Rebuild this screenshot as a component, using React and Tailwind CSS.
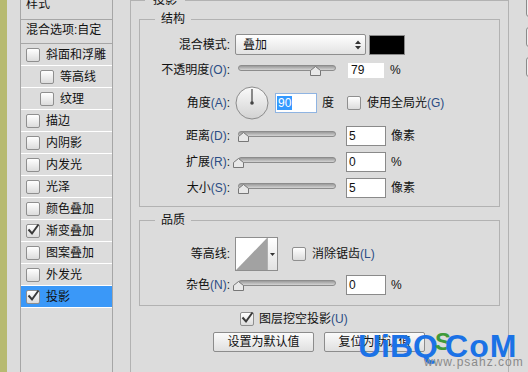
import React from "react";

// left list of layer styles
const styles = [
  { label: "斜面和浮雕" },
  { label: "等高线", sub: true },
  { label: "纹理", sub: true },
  { label: "描边" },
  { label: "内阴影" },
  { label: "内发光" },
  { label: "光泽" },
  { label: "颜色叠加" },
  { label: "渐变叠加", checked: true },
  { label: "图案叠加" },
  { label: "外发光" },
  { label: "投影", checked: true, active: true },
];

function Check({ checked }) {
  return (
    <span className="relative flex h-[14px] w-[14px] shrink-0 rounded-[2px] border border-[#8f8f8f] bg-linear-to-b from-white to-[#dcdcdc]">
      {checked && (
        <svg viewBox="0 0 14 14" className="absolute left-[-1px] top-[-2px] h-[14px] w-[14px] overflow-visible">
          <path d="M2.5 6.5 L6 10.5 L12.5 1.5" fill="none" stroke="#3a3a3a" strokeWidth="2" />
        </svg>
      )}
    </span>
  );
}

function Acc({ children }) {
  return <span className="text-[#2b4c84]">{children}</span>;
}

function Slider({ at }) {
  return (
    <div className="relative ml-[8px] h-[20px] w-[98px] shrink-0">
      <div className="mt-[5px] h-[6px] rounded-full border border-[#8c8c8c] bg-linear-to-b from-[#9a9a9a] to-[#d4d4d4]" />
      <svg className="absolute top-[6px] h-[10px] w-[11px]" style={{ left: at }} viewBox="0 0 11 10">
        <path d="M0.5 9.5V4.5L5.5 0.5L10.5 4.5V9.5Z" fill="#e8e8e8" stroke="#777" />
      </svg>
    </div>
  );
}

function NumBox({ value }) {
  return (
    <div className="ml-[10px] flex h-[20px] w-[40px] shrink-0 items-center border border-[#8a8a8a] bg-white pl-[2px] leading-none">
      {value}
    </div>
  );
}

function Label({ children }) {
  return <div className="w-[90px] shrink-0 text-right leading-[14px]">{children}</div>;
}

function SliderRow({ label, at, value, unit }) {
  return (
    <div className="flex h-[20px] items-center">
      <Label>{label}</Label>
      <Slider at={at} />
      <NumBox value={value} />
      <span className="ml-[5px]">{unit}</span>
    </div>
  );
}

export default function App() {
  return (
    <div className="relative flex h-[372px] w-[528px] overflow-hidden bg-[#dcdcdc] text-[12px] text-[#111] font-['Liberation_Sans','Noto_Sans_CJK_SC',sans-serif]">
      {/* olive strip */}
      <div className="w-[7px] shrink-0 bg-[#b7ba71]" />

      {/* style list */}
      <div className="ml-[13px] w-[93px] shrink-0 border-x border-[#a6a6a6]">
        <div className="flex h-[20px] items-end border-b border-[#a6a6a6] pb-[8px] pl-[5px] leading-[14px]">样式</div>
        <div className="flex h-[24px] items-center border-b border-[#a6a6a6] pb-[3px] pl-[5px] leading-[14px]">混合选项:自定</div>
        {styles.map(s => (
          <div
            key={s.label}
            className={`flex h-[22px] items-center border-b border-white ${s.sub ? "pl-[19px]" : "pl-[5px]"} ${s.active ? "bg-[#3a98f8]" : ""}`}
          >
            <Check checked={s.checked} />
            <span className="ml-[6px] leading-[14px]">{s.label}</span>
          </div>
        ))}
      </div>

      {/* main panel */}
      <div className="flex pl-[17px]">
        <fieldset className="mt-[-7px] h-[400px] w-[379px] shrink-0 border border-[#b2b2b2] px-[8px]">
          <legend className="ml-[6px] px-[8px] leading-[14px]">投影</legend>

          {/* 结构 */}
          <fieldset className="mt-[5px] border border-[#b2b2b2] pb-[8px]">
            <legend className="ml-[15px] px-[6px] leading-[14px]">结构</legend>

            <div className="mt-[8px] flex h-[21px] items-center">
              <Label>混合模式:</Label>
              <div className="ml-[5px] flex h-[21px] w-[131px] items-center justify-between rounded-[2px] border border-[#8e8e8e] bg-linear-to-b from-white to-[#e2e2e2] pl-[7px] pr-[4px]">
                <span className="leading-[14px]">叠加</span>
                <svg viewBox="0 0 6 10" className="h-[10px] w-[6px]">
                  <path d="M0 4L3 0.5L6 4Z M0 6L3 9.5L6 6Z" fill="#333" />
                </svg>
              </div>
              <div className="ml-[3px] h-[20px] w-[36px] border border-[#8a8a8a] bg-black" />
            </div>

            <div className="mt-[5px] flex h-[20px] items-center">
              <Label>
                不透明度<Acc>(O)</Acc>:
              </Label>
              <Slider at={72} />
              <div className="ml-[12px] flex h-[15px] w-[36px] items-center bg-white pl-[3px] leading-none">79</div>
              <span className="ml-[6px]">%</span>
            </div>

            <div className="mt-[7px] flex h-[32px] items-center">
              <Label>
                角度<Acc>(A)</Acc>:
              </Label>
              <svg viewBox="0 0 34 34" className="ml-[5px] h-[34px] w-[34px]">
                <defs>
                  <linearGradient id="dial" x1="0" y1="0" x2="0" y2="1">
                    <stop offset="0" stopColor="#fafafa" />
                    <stop offset="1" stopColor="#d2d2d2" />
                  </linearGradient>
                </defs>
                <circle cx="17" cy="17" r="16" fill="url(#dial)" stroke="#8c8c8c" />
                <line x1="17" y1="17" x2="17" y2="3" stroke="#444" strokeWidth="1.2" />
                <circle cx="17" cy="17" r="1.8" fill="#444" />
              </svg>
              <div className="ml-[6px] flex h-[20px] w-[42px] items-center border border-[#8fb4e2] bg-white pl-[1px]">
                <span className="bg-[#3399ff] px-[1px] leading-[14px] text-white">90</span>
              </div>
              <span className="ml-[5px]">度</span>
              <span className="ml-[13px]">
                <Check />
              </span>
              <span className="ml-[6px] leading-[14px]">
                使用全局光<Acc>(G)</Acc>
              </span>
            </div>

            <div className="mt-[7px]">
              <SliderRow label={<>距离<Acc>(D)</Acc>:</>} at={0} value="5" unit="像素" />
            </div>
            <div className="mt-[6px]">
              <SliderRow label={<>扩展<Acc>(R)</Acc>:</>} at={-5} value="0" unit="%" />
            </div>
            <div className="mt-[6px]">
              <SliderRow label={<>大小<Acc>(S)</Acc>:</>} at={0} value="5" unit="像素" />
            </div>
          </fieldset>

          {/* 品质 */}
          <fieldset className="mt-[6px] border border-[#b2b2b2] pb-[10px]">
            <legend className="ml-[15px] px-[6px] leading-[14px]">品质</legend>

            <div className="mt-[10px] flex h-[34px] items-center">
              <Label>等高线:</Label>
              <div className="ml-[5px] flex h-[34px] w-[43px] border border-[#8e8e8e] bg-white">
                <svg viewBox="0 0 31 32" preserveAspectRatio="none" className="h-full w-[31px]">
                  <path d="M0 32L31 0V32Z" fill="#a2a2a2" />
                </svg>
                <div className="flex flex-1 items-center justify-center border-l border-[#b0b0b0] bg-linear-to-b from-white to-[#e2e2e2]">
                  <svg viewBox="0 0 5 3" className="h-[3px] w-[5px]">
                    <path d="M0 0H5L2.5 3Z" fill="#333" />
                  </svg>
                </div>
              </div>
              <span className="ml-[14px]">
                <Check />
              </span>
              <span className="ml-[6px] leading-[14px]">
                消除锯齿<Acc>(L)</Acc>
              </span>
            </div>

            <div className="mt-[4px]">
              <SliderRow label={<>杂色<Acc>(N)</Acc>:</>} at={-5} value="0" unit="%" />
            </div>
          </fieldset>

          <div className="mt-[6px] flex h-[14px] items-center pl-[101px]">
            <Check checked />
            <span className="ml-[5px] leading-[14px]">
              图层挖空投影<Acc>(U)</Acc>
            </span>
          </div>

          <div className="mt-[6px] flex gap-[10px] pl-[74px]">
            <button className="h-[20px] w-[101px] rounded-[2px] border border-[#8c8c8c] bg-linear-to-b from-[#fbfbfb] to-[#e0e0e0] leading-none">
              设置为默认值
            </button>
            <button className="h-[20px] w-[101px] rounded-[2px] border border-[#8c8c8c] bg-linear-to-b from-[#fbfbfb] to-[#e0e0e0] leading-none">
              复位为默认值
            </button>
          </div>
        </fieldset>

        {/* dialog buttons, cut off at the right edge */}
        <div className="ml-[17px] flex flex-col">
          <div className="mt-[-3px] h-[20px] w-[80px] rounded-[3px] border border-[#8a8a8a] bg-[#eeeeee]" />
          <div className="mt-[10px] h-[20px] w-[80px] rounded-[3px] border border-[#8a8a8a] bg-[#eeeeee]" />
          <div className="mt-[10px] h-[20px] w-[80px] rounded-[3px] border border-[#8a8a8a] bg-[#eeeeee]" />
        </div>
      </div>

      {/* watermark */}
      <div className="absolute left-[358px] top-[330px] leading-none">
        <div className="flex items-start text-[32px] font-bold leading-[32px] text-[#1b72e6]">
          <span>UiBQ</span>
          <span className="mt-[-4px] ml-[-3px] text-[24px] leading-[32px] text-[#3f9a3a]">S</span>
          <span className="ml-[-6px] tracking-[1px]">CoM</span>
        </div>
        <div className="mt-[-6px] ml-[66px] text-[12px] tracking-[1px] text-[#8a8a8a]">www.psahz.com</div>
      </div>
    </div>
  );
}
